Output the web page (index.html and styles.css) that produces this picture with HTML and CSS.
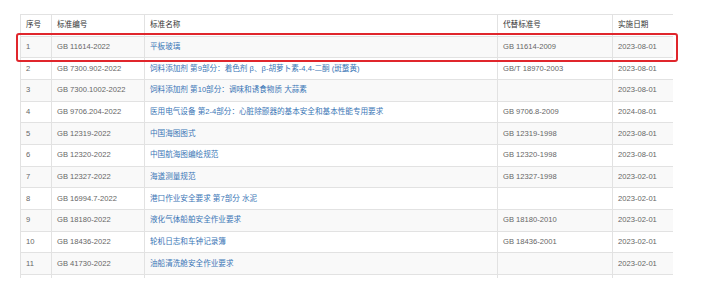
FILE: index.html
```html
<!DOCTYPE html>
<html lang="zh-CN">
<head>
<meta charset="utf-8">
<title>标准列表</title>
<link rel="stylesheet" href="styles.css">
</head>
<body>
<div class="page">
  <div class="table-wrap">
    <table class="std-table">
      <colgroup>
        <col class="c-no"><col class="c-code"><col class="c-name"><col class="c-rep"><col class="c-date">
      </colgroup>
      <thead>
        <tr><th>序号</th><th>标准编号</th><th>标准名称</th><th>代替标准号</th><th>实施日期</th></tr>
      </thead>
      <tbody>
        <tr><td>1</td><td>GB 11614-2022</td><td><a href="#">平板玻璃</a></td><td>GB 11614-2009</td><td>2023-08-01</td></tr>
        <tr><td>2</td><td>GB 7300.902-2022</td><td><a href="#">饲料添加剂 第9部分：着色剂 β、β-胡萝卜素-4,4-二酮 (斑蝥黄)</a></td><td>GB/T 18970-2003</td><td>2023-08-01</td></tr>
        <tr><td>3</td><td>GB 7300.1002-2022</td><td><a href="#">饲料添加剂 第10部分：调味和诱食物质 大蒜素</a></td><td></td><td>2023-08-01</td></tr>
        <tr><td>4</td><td>GB 9706.204-2022</td><td><a href="#">医用电气设备 第2-4部分：心脏除颤器的基本安全和基本性能专用要求</a></td><td>GB 9706.8-2009</td><td>2024-08-01</td></tr>
        <tr><td>5</td><td>GB 12319-2022</td><td><a href="#">中国海图图式</a></td><td>GB 12319-1998</td><td>2023-08-01</td></tr>
        <tr><td>6</td><td>GB 12320-2022</td><td><a href="#">中国航海图编绘规范</a></td><td>GB 12320-1998</td><td>2023-08-01</td></tr>
        <tr><td>7</td><td>GB 12327-2022</td><td><a href="#">海道测量规范</a></td><td>GB 12327-1998</td><td>2023-02-01</td></tr>
        <tr><td>8</td><td>GB 16994.7-2022</td><td><a href="#">港口作业安全要求 第7部分 水泥</a></td><td></td><td>2023-02-01</td></tr>
        <tr><td>9</td><td>GB 18180-2022</td><td><a href="#">液化气体船舶安全作业要求</a></td><td>GB 18180-2010</td><td>2023-02-01</td></tr>
        <tr><td>10</td><td>GB 18436-2022</td><td><a href="#">轮机日志和车钟记录簿</a></td><td>GB 18436-2001</td><td>2023-02-01</td></tr>
        <tr><td>11</td><td>GB 41730-2022</td><td><a href="#">油船清洗舱安全作业要求</a></td><td></td><td>2023-02-01</td></tr>
        <tr><td></td><td></td><td></td><td></td><td></td></tr>
      </tbody>
    </table>
  </div>
  <div class="highlight"></div>
</div>
</body>
</html>
```
FILE: styles.css
```css
html, body {
  margin: 0;
  padding: 0;
  background: #fff;
}
.page {
  position: relative;
  width: 714px;
  height: 290px;
  padding: 14px 0 0 20px;
  box-sizing: border-box;
}
.table-wrap {
  width: 653px;
  height: 264px;
  overflow: hidden;
}
.std-table {
  border-collapse: collapse;
  table-layout: fixed;
  width: 653px;
  font-family: "Liberation Sans", Arial, "Noto Sans CJK SC", sans-serif;
  font-size: 7.6px;
  color: #666;
}
.c-no { width: 31px; }
.c-code { width: 93px; }
.c-name { width: 353px; }
.c-rep { width: 115px; }
.c-date { width: 61px; }
.std-table tr {
  height: 21.67px;
}
.std-table th,
.std-table td {
  border: 1px solid #e2e2e2;
  padding: 0 5px;
  text-align: left;
  white-space: nowrap;
  overflow: hidden;
  line-height: 10px;
  vertical-align: middle;
}
.std-table th {
  font-weight: normal;
  color: #333;
  background: #fff;
}
.std-table tbody tr:nth-child(odd) {
  background: #f9f9f9;
}
.std-table a {
  color: #3a76b6;
  text-decoration: none;
}
.highlight {
  position: absolute;
  left: 16px;
  top: 33px;
  width: 662px;
  height: 29px;
  box-sizing: border-box;
  border: 2px solid #e0262c;
  border-radius: 3px;
}
```
